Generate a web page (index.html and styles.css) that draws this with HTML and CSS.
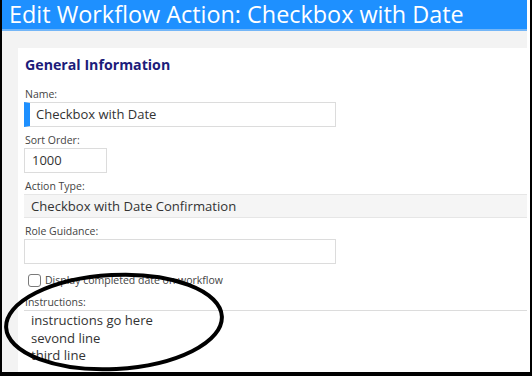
FILE: index.html
```html
<!DOCTYPE html>
<html lang="en">
<head>
  <meta charset="UTF-8" />
  <title>Edit Workflow Action</title>
  <link rel="stylesheet" href="styles.css">
</head>
<body>
  <div class="frame">
    <div class="window">
      <div class="titlebar">Edit Workflow Action: Checkbox with Date</div>
      <div class="content">
        <div class="card">
          <h2>General Information</h2>

          <div class="field first">
            <label>Name:</label>
            <div class="input wide accent">Checkbox with Date</div>
          </div>

          <div class="field">
            <label>Sort Order:</label>
            <div class="input short">1000</div>
          </div>

          <div class="field">
            <label>Action Type:</label>
            <div class="select">Checkbox with Date Confirmation</div>
          </div>

          <div class="field">
            <label>Role Guidance:</label>
            <div class="input wide"></div>
          </div>

          <div class="check">
            <span class="box"></span>
            <span>Display completed date on workflow</span>
          </div>

          <div class="field tight">
            <label>Instructions:</label>
            <div class="textarea">instructions go here<br>sevond line<br>third line</div>
          </div>
        </div>
      </div>
    </div>

    <!-- hand drawn circle over the screenshot -->
    <svg class="mark" width="240" height="110" viewBox="0 0 240 110">
      <ellipse cx="112" cy="56" rx="108" ry="47" fill="none" stroke="#000" stroke-width="4" transform="rotate(-3 112 56)" />
    </svg>
  </div>
</body>
</html>
```

FILE: styles.css
```css
* {
  box-sizing: border-box;
}
body {
  margin: 0;
  background: #fff;
  font-family: 'Open Sans', 'Noto Sans', sans-serif;
}
.frame {
  position: relative;
  width: 532px;
  height: 376px;
  overflow: hidden;
  border-left: 2px solid #000;
  border-right: 2px solid #000;
  border-bottom: 4px solid #000;
  padding-right: 3px;
  background: #fff;
}
.window {
  height: 100%;
  background: #f3f3f3;
  display: flex;
  flex-direction: column;
}
.titlebar {
  height: 31px;
  background: #1e90ff;
  border-bottom: 2px solid #74b6f7;
  color: #fff;
  font-size: 23.4px;
  line-height: 29px;
  padding-left: 7px;
  white-space: nowrap;
}
.content {
  flex: 1;
  padding: 17px 0 0 16px;
}
.card {
  background: #fff;
  height: 100%;
  padding: 7px 0 0 6px;
}
h2 {
  margin: 0;
  padding-left: 1px;
  font-size: 14.2px;
  line-height: 20px;
  font-weight: 700;
  color: #1c1c7a;
}
.field {
  margin-top: 7px;
}
.field.first {
  margin-top: 13px;
}
.field.tight {
  margin-top: 9px;
}
label {
  display: block;
  font-size: 10.5px;
  line-height: 13px;
  color: #444;
  padding-left: 1px;
  margin-bottom: 1px;
}
.input {
  height: 25px;
  border: 1px solid #dcdcdc;
  font-size: 13px;
  line-height: 23px;
  color: #333;
  padding-left: 7px;
  background: #fff;
}
.input.wide {
  width: 312px;
}
.input.short {
  width: 83px;
}
.input.accent {
  border-left: 6px solid #1e90ff;
  padding-left: 6px;
}
.select {
  height: 24px;
  background: #f5f5f5;
  border-top: 1px solid #e6e6e6;
  border-bottom: 1px solid #e6e6e6;
  font-size: 13.1px;
  line-height: 22px;
  color: #333;
  padding-left: 7px;
}
.check {
  display: flex;
  align-items: center;
  gap: 4px;
  margin-top: 9px;
  padding-left: 4px;
  height: 14px;
  font-size: 10.5px;
  color: #444;
}
.box {
  width: 13px;
  height: 13px;
  border: 1px solid #7a7a7a;
  border-radius: 3px;
  background: #fff;
}
.textarea {
  border-top: 1px solid #dcdcdc;
  padding: 1px 0 0 7px;
  font-size: 13.1px;
  line-height: 17.5px;
  color: #333;
  height: 80px;
}
.mark {
  position: absolute;
  left: 0;
  top: 266px;
}
```
